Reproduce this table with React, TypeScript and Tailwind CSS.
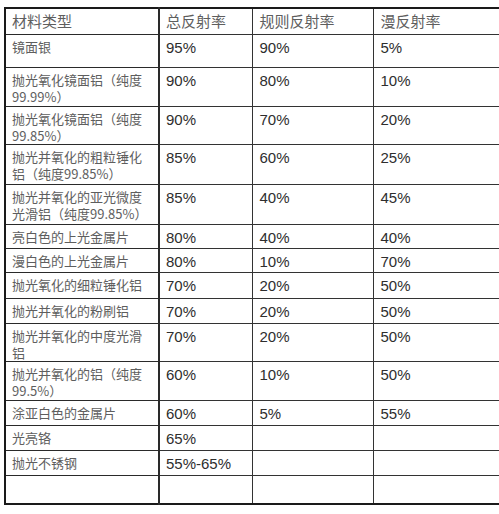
import React from 'react';

type Row = {
  name: React.ReactNode;
  total: string;
  specular: string;
  diffuse: string;
  h: number;
};

const rows: Row[] = [
  { name: '镜面银', total: '95%', specular: '90%', diffuse: '5%', h: 33 },
  { name: <>抛光氧化镜面铝（纯度<br />99.99%）</>, total: '90%', specular: '80%', diffuse: '10%', h: 39 },
  { name: <>抛光氧化镜面铝（纯度<br />99.85%）</>, total: '90%', specular: '70%', diffuse: '20%', h: 37 },
  { name: <>抛光并氧化的粗粒锤化<br />铝（纯度99.85%）</>, total: '85%', specular: '60%', diffuse: '25%', h: 40 },
  { name: <>抛光并氧化的亚光微度<br />光滑铝（纯度99.85%）</>, total: '85%', specular: '40%', diffuse: '45%', h: 40 },
  { name: '亮白色的上光金属片', total: '80%', specular: '40%', diffuse: '40%', h: 24 },
  { name: '漫白色的上光金属片', total: '80%', specular: '10%', diffuse: '70%', h: 24 },
  { name: '抛光氧化的细粒锤化铝', total: '70%', specular: '20%', diffuse: '50%', h: 26 },
  { name: '抛光并氧化的粉刷铝', total: '70%', specular: '20%', diffuse: '50%', h: 25 },
  { name: <>抛光并氧化的中度光滑<br />铝</>, total: '70%', specular: '20%', diffuse: '50%', h: 38 },
  { name: <>抛光并氧化的铝（纯度<br />99.5%）</>, total: '60%', specular: '10%', diffuse: '50%', h: 39 },
  { name: '涂亚白色的金属片', total: '60%', specular: '5%', diffuse: '55%', h: 25 },
  { name: '光亮铬', total: '65%', specular: '', diffuse: '', h: 25 },
  { name: '抛光不锈钢', total: '55%-65%', specular: '', diffuse: '', h: 25 },
  { name: '', total: '', specular: '', diffuse: '', h: 29 },
];

const cn = "[font-family:'Noto_Sans_CJK_SC','Liberation_Sans',sans-serif] text-[13px] leading-[17px] text-[#5e5e5e]";
const num = "[font-family:'Liberation_Sans','Noto_Sans_CJK_SC',sans-serif] text-[15px] leading-[17px] text-[#2e2e2e]";

export default function App() {
  return (
    <div className="h-[514px] w-[499px] bg-white pl-[4px] pt-[7px]">
      <table className="w-[495px] table-fixed border-collapse border-2 border-[#1a1a1a]">
        <colgroup>
          <col className="w-[154px]" />
          <col className="w-[93px]" />
          <col className="w-[121px]" />
          <col className="w-[127px]" />
        </colgroup>
        <thead>
          <tr className="h-[26px]">
            <th className="border-r-2 border-b border-[#2a2a2a] pl-[6px] text-left align-middle font-normal [font-family:'Noto_Sans_CJK_SC',sans-serif] text-[15px] leading-[18px] text-[#5e5e5e]">
              材料类型
            </th>
            <th className="border-r border-b border-[#333] pl-[6px] text-left align-middle font-normal [font-family:'Noto_Sans_CJK_SC',sans-serif] text-[15px] leading-[18px] text-[#5e5e5e]">
              总反射率
            </th>
            <th className="border-r border-b border-[#333] pl-[7px] text-left align-middle font-normal [font-family:'Noto_Sans_CJK_SC',sans-serif] text-[15px] leading-[18px] text-[#5e5e5e]">
              规则反射率
            </th>
            <th className="border-b border-[#333] pl-[7px] text-left align-middle font-normal [font-family:'Noto_Sans_CJK_SC',sans-serif] text-[15px] leading-[18px] text-[#5e5e5e]">
              漫反射率
            </th>
          </tr>
        </thead>
        <tbody>
          {rows.map((r, i) => (
            <tr key={i} style={{ height: r.h }}>
              <td className={`border-r-2 border-b border-[#2a2a2a] pl-[6px] pt-[3px] align-top ${cn}`}>
                {r.name}
              </td>
              <td
                className={`border-r border-b border-[#333] pl-[6px] pt-[4px] align-top ${num} ${
                  r.total.length > 4 ? 'text-[13px]' : ''
                }`}
              >
                {r.total}
              </td>
              <td className={`border-r border-b border-[#333] pl-[7px] pt-[4px] align-top ${num}`}>
                {r.specular}
              </td>
              <td className={`border-b border-[#333] pl-[7px] pt-[4px] align-top ${num}`}>{r.diffuse}</td>
            </tr>
          ))}
        </tbody>
      </table>
    </div>
  );
}
